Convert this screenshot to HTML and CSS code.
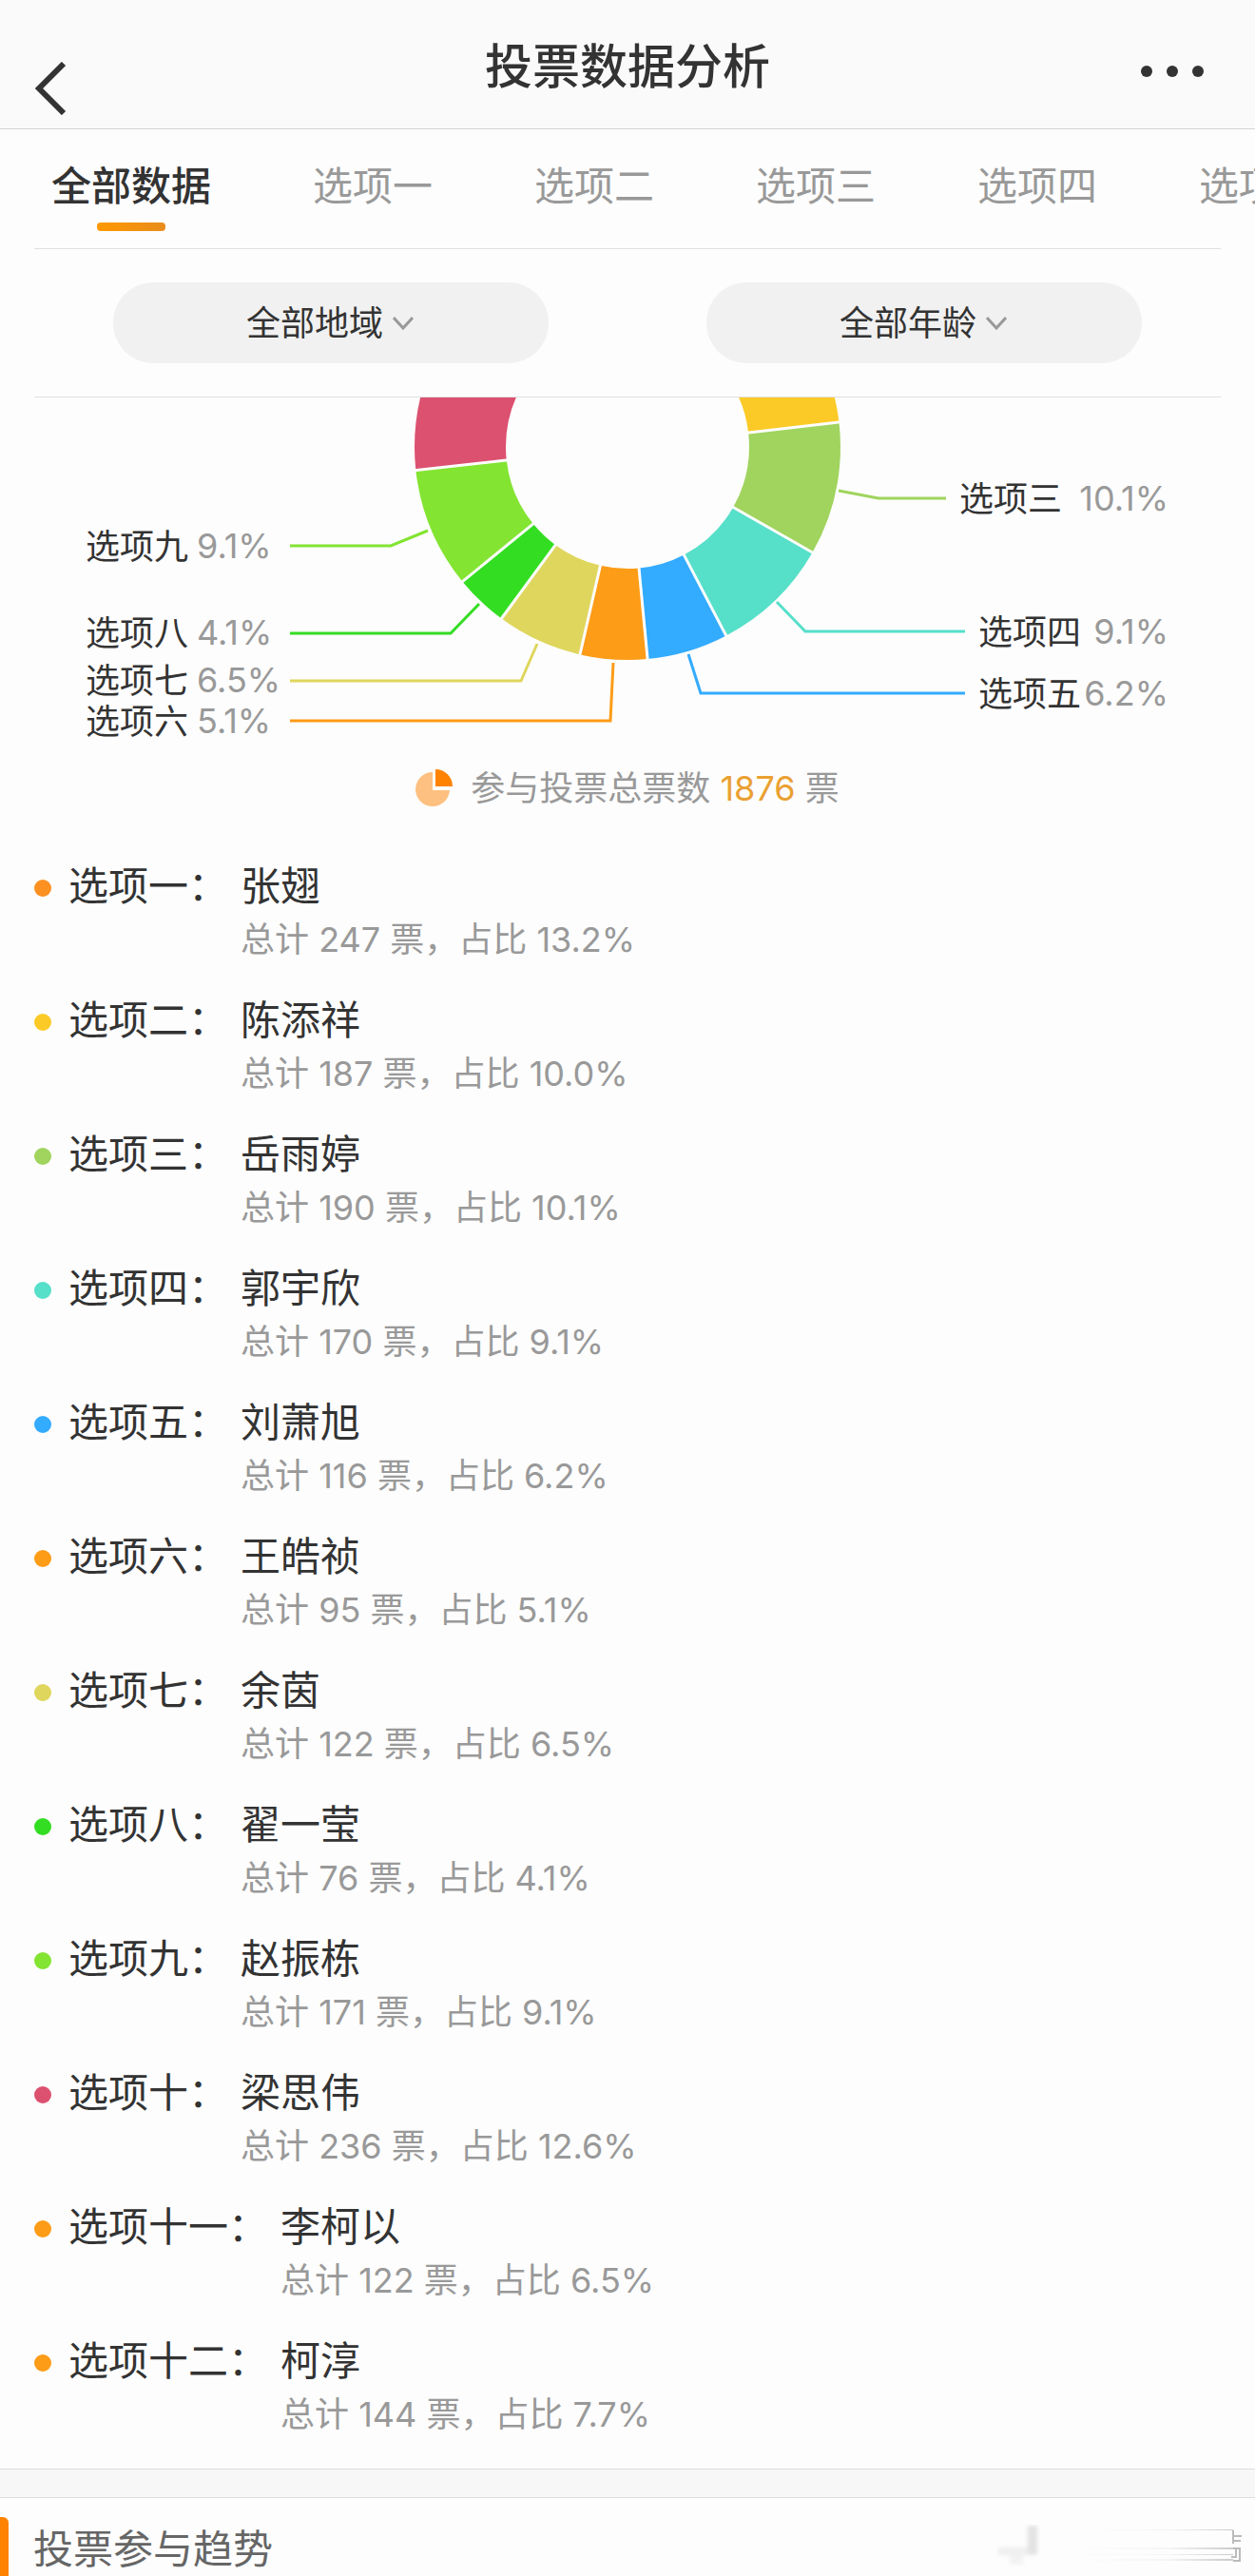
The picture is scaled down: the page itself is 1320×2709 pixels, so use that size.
FILE: index.html
```
<!DOCTYPE html>
<html lang="zh-CN">
<head>
<meta charset="utf-8">
<meta name="viewport" content="width=device-width, initial-scale=1">
<title>投票数据分析</title>
<link rel="stylesheet" href="styles.css">
</head>
<body>
<header class="topbar">
  <button class="back" type="button" aria-label="返回">
    <svg width="34" height="56" viewBox="0 0 34 56"><path d="M31 2 5 28l26 26" fill="none" stroke="currentColor" stroke-width="6"/></svg>
  </button>
  <h1 class="title">投票数据分析</h1>
  <button class="more" type="button" aria-label="更多">
    <svg width="68" height="12" viewBox="0 0 68 12" fill="currentColor"><circle cx="7" cy="6" r="6"/><circle cx="34" cy="6" r="6"/><circle cx="61" cy="6" r="6"/></svg>
  </button>
</header>

<main>
  <nav class="tabs">
    <button class="tab tab-active" type="button">全部数据</button>
    <button class="tab" type="button">选项一</button>
    <button class="tab" type="button">选项二</button>
    <button class="tab" type="button">选项三</button>
    <button class="tab" type="button">选项四</button>
    <button class="tab" type="button">选项五</button>
  </nav>

  <div class="filters">
    <div class="filter">
      <select class="filter-select" aria-label="地域"><option>全部地域</option></select>
      <svg class="chevron" width="22" height="14" viewBox="0 0 22 14"><path d="m1 1 10 11 10-11" fill="none" stroke="currentColor" stroke-width="3"/></svg>
    </div>
    <div class="filter">
      <select class="filter-select" aria-label="年龄"><option>全部年龄</option></select>
      <svg class="chevron" width="22" height="14" viewBox="0 0 22 14"><path d="m1 1 10 11 10-11" fill="none" stroke="currentColor" stroke-width="3"/></svg>
    </div>
  </div>

  <svg class="chart" viewBox="0 0 1320 377" role="img" aria-label="各选项得票占比">
    <g transform="translate(660 52)">
      <g class="ring" transform="rotate(-90)">
        <circle class="c1" r="176" pathLength="1876" stroke-dasharray="247 1629"/>
        <circle class="c2" r="176" pathLength="1876" stroke-dasharray="187 1689" stroke-dashoffset="-247"/>
        <circle class="c3" r="176" pathLength="1876" stroke-dasharray="190 1686" stroke-dashoffset="-434"/>
        <circle class="c4" r="176" pathLength="1876" stroke-dasharray="170 1706" stroke-dashoffset="-624"/>
        <circle class="c5" r="176" pathLength="1876" stroke-dasharray="116 1760" stroke-dashoffset="-794"/>
        <circle class="c6" r="176" pathLength="1876" stroke-dasharray="95 1781" stroke-dashoffset="-910"/>
        <circle class="c7" r="176" pathLength="1876" stroke-dasharray="122 1754" stroke-dashoffset="-1005"/>
        <circle class="c8" r="176" pathLength="1876" stroke-dasharray="76 1800" stroke-dashoffset="-1127"/>
        <circle class="c9" r="176" pathLength="1876" stroke-dasharray="171 1705" stroke-dashoffset="-1203"/>
        <circle class="c10" r="176" pathLength="1876" stroke-dasharray="236 1640" stroke-dashoffset="-1374"/>
      </g>
      <g class="gaps">
        <path d="M0-124V-228" transform="rotate(83.3)"/>
        <path d="M0-124V-228" transform="rotate(119.7)"/>
        <path d="M0-124V-228" transform="rotate(152.4)"/>
        <path d="M0-124V-228" transform="rotate(174.6)"/>
        <path d="M0-124V-228" transform="rotate(192.9)"/>
        <path d="M0-124V-228" transform="rotate(216.3)"/>
        <path d="M0-124V-228" transform="rotate(230.8)"/>
        <path d="M0-124V-228" transform="rotate(263.7)"/>
      </g>
    </g>
    <g class="leaders">
      <path class="c9" d="M305 156H411L450 140"/>
      <path class="c8" d="M305 248H474L504 217"/>
      <path class="c7" d="M305 298H548L565 259"/>
      <path class="c6" d="M305 340H642L645 279"/>
      <path class="c3" d="M882 98 924 106H995"/>
      <path class="c4" d="M817 215 847 246H1015"/>
      <path class="c5" d="M724 270 737 311H1015"/>
    </g>
    <g class="names">
      <text x="90" y="170">选项九</text>
      <text x="90" y="261">选项八</text>
      <text x="90" y="311">选项七</text>
      <text x="90" y="354">选项六</text>
      <text x="1009" y="120">选项三</text>
      <text x="1029" y="260">选项四</text>
      <text x="1029" y="325">选项五</text>
    </g>
    <g class="shares">
      <text x="207" y="169">9.1%</text>
      <text x="207" y="260">4.1%</text>
      <text x="207" y="310">6.5%</text>
      <text x="207" y="353">5.1%</text>
    </g>
    <g class="shares shares-right">
      <text x="1229" y="119">10.1%</text>
      <text x="1229" y="259">9.1%</text>
      <text x="1229" y="324">6.2%</text>
    </g>
  </svg>

  <p class="total">
    <svg width="40" height="40" viewBox="0 0 40 40"><path d="M18 3v19h18A18 18 0 1 1 18 3Z" fill="#fdc080"/><path d="M21 0a18 18 0 0 1 18 18H21Z" fill="#ff8200"/></svg>
    <span>参与投票总票数 <strong class="total-num">1876</strong> 票</span>
  </p>

  <ul class="options">
    <li class="option"><i class="dot c1"></i><span class="key">选项一：</span><div><h2 class="name">张翅</h2><p class="stat">总计 247 票，占比 13.2%</p></div></li>
    <li class="option"><i class="dot c2"></i><span class="key">选项二：</span><div><h2 class="name">陈添祥</h2><p class="stat">总计 187 票，占比 10.0%</p></div></li>
    <li class="option"><i class="dot c3"></i><span class="key">选项三：</span><div><h2 class="name">岳雨婷</h2><p class="stat">总计 190 票，占比 10.1%</p></div></li>
    <li class="option"><i class="dot c4"></i><span class="key">选项四：</span><div><h2 class="name">郭宇欣</h2><p class="stat">总计 170 票，占比 9.1%</p></div></li>
    <li class="option"><i class="dot c5"></i><span class="key">选项五：</span><div><h2 class="name">刘萧旭</h2><p class="stat">总计 116 票，占比 6.2%</p></div></li>
    <li class="option"><i class="dot c6"></i><span class="key">选项六：</span><div><h2 class="name">王皓祯</h2><p class="stat">总计 95 票，占比 5.1%</p></div></li>
    <li class="option"><i class="dot c7"></i><span class="key">选项七：</span><div><h2 class="name">余茵</h2><p class="stat">总计 122 票，占比 6.5%</p></div></li>
    <li class="option"><i class="dot c8"></i><span class="key">选项八：</span><div><h2 class="name">翟一莹</h2><p class="stat">总计 76 票，占比 4.1%</p></div></li>
    <li class="option"><i class="dot c9"></i><span class="key">选项九：</span><div><h2 class="name">赵振栋</h2><p class="stat">总计 171 票，占比 9.1%</p></div></li>
    <li class="option"><i class="dot c10"></i><span class="key">选项十：</span><div><h2 class="name">梁思伟</h2><p class="stat">总计 236 票，占比 12.6%</p></div></li>
    <li class="option"><i class="dot c6"></i><span class="key">选项十一：</span><div><h2 class="name">李柯以</h2><p class="stat">总计 122 票，占比 6.5%</p></div></li>
    <li class="option"><i class="dot c6"></i><span class="key">选项十二：</span><div><h2 class="name">柯淳</h2><p class="stat">总计 144 票，占比 7.7%</p></div></li>
  </ul>

  <section class="trend">
    <h2 class="trend-title">投票参与趋势</h2>
    <svg class="stamp" width="260" height="44" viewBox="0 0 260 44" aria-hidden="true">
      <defs>
        <linearGradient id="fade" x1="0" x2="1"><stop offset="0" stop-color="#999" stop-opacity="0"/><stop offset=".6" stop-color="#999" stop-opacity=".08"/><stop offset="1" stop-color="#999" stop-opacity=".5"/></linearGradient>
        <filter id="soft"><feGaussianBlur stdDeviation="2"/></filter>
      </defs>
      <g fill="#e2e2e2" filter="url(#soft)"><path d="M33 1h10v30H33z"/><path d="M2 24h40v8H2z" opacity=".5"/><path d="M14 32h14v10H14z" opacity=".4"/></g>
      <path d="M80 5h169v1H80zM80 24h169v2H80zM80 31h169v1H80zM80 36h169v2H80z" fill="url(#fade)"/>
      <path d="M249 6v14M249 12h9M249 17h8M249 25h7v13h-7M252 26v8h-5" fill="none" stroke="#bbb" stroke-width="2"/>
    </svg>
  </section>
</main>
</body>
</html>
```
FILE: styles.css
```
* {
  box-sizing: border-box;
}

body {
  margin: 0;
  background: #fdfdfd;
  color: #333;
  font-family: Inter, "Noto Sans CJK SC", sans-serif;
  font-size: 36px;
}

h1,
h2,
p,
ul {
  margin: 0;
  padding: 0;
  font-weight: 400;
}

button {
  border: 0;
  padding: 0;
  background: none;
  color: inherit;
  font: inherit;
}

svg {
  display: block;
}

/* Top bar */
.topbar {
  display: grid;
  grid-template-columns: 1fr auto 1fr;
  height: 136px;
  padding: 0 36px;
  border-bottom: 1px solid #d2d2d2;
  background: #fafafa;
}

.back {
  align-self: end;
  justify-self: start;
  padding-bottom: 14px;
}

.title {
  height: 135px;
  font-size: 50px;
  font-weight: 500;
  line-height: 140px;
}

.more {
  justify-self: end;
  padding: 14px 17px 0 0;
}

/* Tabs */
.tabs {
  display: flex;
  gap: 107px;
  height: 125px;
  padding-left: 54px;
  overflow: hidden;
}

.tab {
  position: relative;
  flex: none;
  height: 119px;
  color: #999;
  font-size: 42px;
  line-height: 119px;
}

.tab-active {
  color: #333;
  font-weight: 500;
}

.tab-active::after {
  content: "";
  position: absolute;
  bottom: 12px;
  left: 50%;
  width: 72px;
  height: 9px;
  margin-left: -36px;
  border-radius: 4px;
  background: linear-gradient(90deg, #f90, #e98c1c);
}

/* Filters */
.filters {
  display: grid;
  grid-template-columns: 1fr 1fr;
  justify-items: center;
  margin: 0 36px;
  padding: 35px 0;
  border: solid #e0e0e0;
  border-width: 1px 0;
}

.filter {
  position: relative;
  width: 458px;
  max-width: 90%;
}

.filter-select {
  display: block;
  width: 100%;
  height: 85px;
  padding: 0 34px 0 0;
  border: 0;
  border-radius: 42px;
  appearance: none;
  background: #f1f1f1;
  color: #333;
  font: inherit;
  text-align: center;
  text-align-last: center;
}

.chevron {
  position: absolute;
  top: 36px;
  left: calc(50% + 65px);
  color: #999;
  pointer-events: none;
}

/* Series colours */
.c1 { color: #fc9021; }
.c2 { color: #fbca26; }
.c3 { color: #a0d45e; }
.c4 { color: #56dfc9; }
.c5 { color: #33abfe; }
.c6 { color: #fd9c17; }
.c7 { color: #dfd65d; }
.c8 { color: #33dd22; }
.c9 { color: #83e432; }
.c10 { color: #dc5170; }

/* Donut chart */
.chart {
  width: 100%;
  overflow: hidden;
}

.ring {
  fill: none;
  stroke-width: 96px;
}

.ring circle,
.leaders path {
  stroke: currentColor;
}

.gaps {
  stroke: #fdfdfd;
  stroke-width: 3px;
}

.leaders {
  fill: none;
  stroke-width: 3px;
}

.names {
  fill: #333;
}

.shares {
  fill: #999;
}

.shares-right {
  text-anchor: end;
}

.total {
  display: flex;
  align-items: center;
  justify-content: center;
  gap: 18px;
  padding-bottom: 40px;
  color: #999;
  line-height: 68px;
}

.total-num {
  color: #eaa032;
  font-weight: 400;
}

/* Option list */
.options {
  padding: 0 36px 2px;
  list-style: none;
}

.option {
  display: flex;
  height: 141px;
}

.dot {
  flex: none;
  width: 18px;
  height: 18px;
  margin: 22px 18px 0 0;
  border-radius: 50%;
  background: currentColor;
}

.key,
.name {
  font-size: 42px;
  line-height: 57px;
}

.key {
  margin-right: 13px;
}

.stat {
  color: #999;
  line-height: 57px;
}

/* Trend section */
.trend {
  display: flex;
  justify-content: space-between;
  padding: 21px 12px 0 0;
  border-top: 29px solid #f7f7f7;
  box-shadow: inset 0 1px #ddd, 0 -1px #ddd;
}

.trend-title {
  display: flex;
  gap: 26px;
  padding-top: 6px;
  color: #666;
  font-size: 42px;
  line-height: 56px;
}

.trend-title::before {
  content: "";
  width: 9px;
  margin-top: -6px;
  border-radius: 0 6px 0 0;
  background: #ff8200;
}

.stamp {
  margin-top: 8px;
}
```
